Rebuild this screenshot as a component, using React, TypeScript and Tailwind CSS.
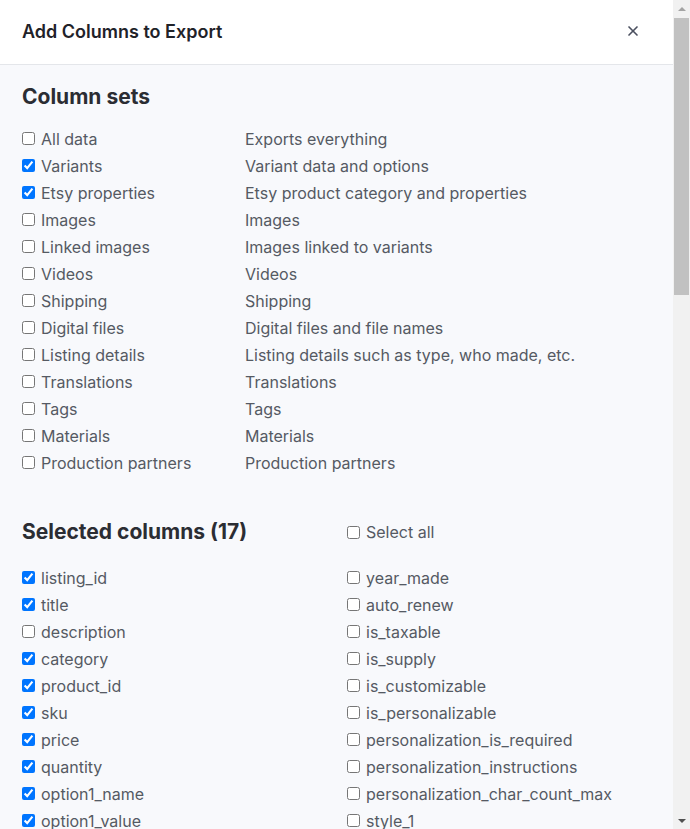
import { X } from "lucide-react";

const columnSets = [
  { name: "All data", desc: "Exports everything", checked: false },
  { name: "Variants", desc: "Variant data and options", checked: true },
  { name: "Etsy properties", desc: "Etsy product category and properties", checked: true },
  { name: "Images", desc: "Images", checked: false },
  { name: "Linked images", desc: "Images linked to variants", checked: false },
  { name: "Videos", desc: "Videos", checked: false },
  { name: "Shipping", desc: "Shipping", checked: false },
  { name: "Digital files", desc: "Digital files and file names", checked: false },
  { name: "Listing details", desc: "Listing details such as type, who made, etc.", checked: false },
  { name: "Translations", desc: "Translations", checked: false },
  { name: "Tags", desc: "Tags", checked: false },
  { name: "Materials", desc: "Materials", checked: false },
  { name: "Production partners", desc: "Production partners", checked: false },
];

const leftColumns: [string, boolean][] = [
  ["listing_id", true],
  ["title", true],
  ["description", false],
  ["category", true],
  ["product_id", true],
  ["sku", true],
  ["price", true],
  ["quantity", true],
  ["option1_name", true],
  ["option1_value", true],
  ["option2_name", true],
  ["option2_value", true],
  ["property_id", true],
  ["property_name", true],
  ["property_value", true],
  ["scale_id", true],
  ["scale_name", true],
  ["price_on_property", false],
  ["quantity_on_property", false],
  ["sku_on_property", false],
];

const rightColumns = [
  "year_made",
  "auto_renew",
  "is_taxable",
  "is_supply",
  "is_customizable",
  "is_personalizable",
  "personalization_is_required",
  "personalization_instructions",
  "personalization_char_count_max",
  "style_1",
  "style_2",
  "language",
  "title_translation",
  "description_translation",
  "tags_translation",
  "featured_rank",
  "should_auto_renew",
  "has_variations",
  "image_alt_1",
  "image_alt_2",
];

function Check({ label, checked }: { label: string; checked: boolean }) {
  return (
    <label className="flex items-center h-[27px] text-[16px] text-[#555a63] whitespace-nowrap">
      <input type="checkbox" defaultChecked={checked} className="w-[13px] h-[13px] m-0 mr-[6px] shrink-0" />
      <span>{label}</span>
    </label>
  );
}

// the modal body scrolls; headless capture hides native scrollbars so draw one
function ScrollBar() {
  return (
    <div className="w-[17px] h-[829px] bg-[#f1f1f1] flex flex-col items-center shrink-0">
      <div className="h-[17px] w-full flex items-center justify-center">
        <div className="w-0 h-0 border-x-[4px] border-x-transparent border-b-[4px] border-b-[#a3a3a3]" />
      </div>
      <div className="w-[15px] h-[277px] bg-[#c1c1c1] mt-[1px]" />
      <div className="flex-1" />
      <div className="h-[17px] w-full flex items-center justify-center">
        <div className="w-0 h-0 border-x-[4px] border-x-transparent border-t-[4px] border-t-[#505050]" />
      </div>
    </div>
  );
}

export default function App() {
  return (
    <div className="h-[829px] w-[690px] flex overflow-hidden font-['Inter',sans-serif]">
      <div className="w-[673px] h-[829px] overflow-hidden bg-[#f8f9fc]">
        <div className="h-[65px] bg-white border-b border-[#e4e6ea] flex items-center justify-between pl-[22px] pr-[32px]">
          <h1 className="text-[18px] font-semibold text-[#1f2229] -mt-[2px]">Add Columns to Export</h1>
          <button className="text-[#4b5060] -mt-[2px]">
            <X size={16} strokeWidth={2.5} />
          </button>
        </div>

        <div className="px-[22px] pt-[18px] pb-10">
          <h2 className="text-[21px] leading-[28px] font-bold text-[#2b2d33]">Column sets</h2>
          <div className="mt-[14px]">
            {columnSets.map((s) => (
              <div key={s.name} className="grid grid-cols-[223px_1fr]">
                <Check label={s.name} checked={s.checked} />
                <div className="h-[27px] flex items-center text-[16px] text-[#555a63] whitespace-nowrap">{s.desc}</div>
              </div>
            ))}
          </div>

          <div className="grid grid-cols-[325px_1fr] mt-[42px] items-center">
            <h2 className="text-[21px] leading-[28px] font-bold text-[#2b2d33]">Selected columns (17)</h2>
            <Check label="Select all" checked={false} />
          </div>

          <div className="grid grid-cols-[325px_1fr] mt-[18px]">
            <div className="flex flex-col">
              {leftColumns.map(([c, on]) => (
                <Check key={c} label={c} checked={on} />
              ))}
            </div>
            <div className="flex flex-col">
              {rightColumns.map((c) => (
                <Check key={c} label={c} checked={false} />
              ))}
            </div>
          </div>
        </div>
      </div>
      <ScrollBar />
    </div>
  );
}
